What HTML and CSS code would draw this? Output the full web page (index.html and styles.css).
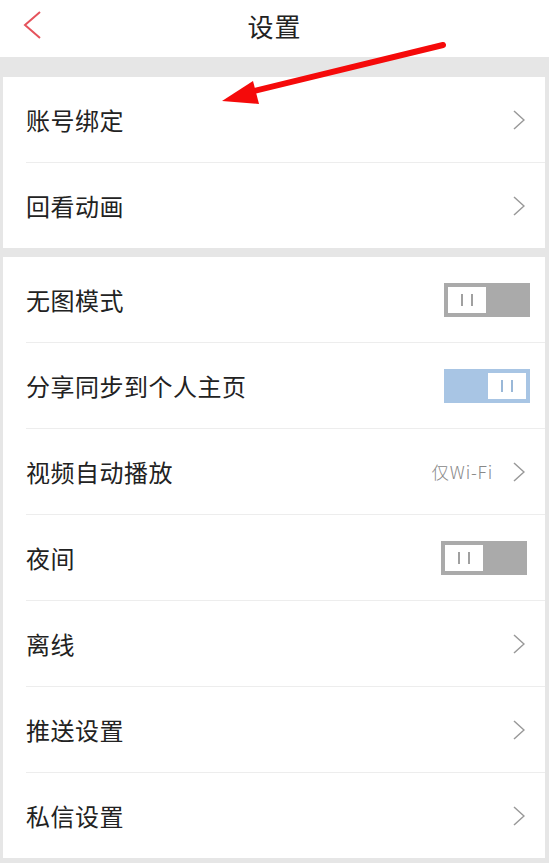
FILE: index.html
```html
<!DOCTYPE html>
<html lang="zh">
<head>
<meta charset="utf-8">
<link rel="stylesheet" href="styles.css">
</head>
<body>
<div class="page">
  <header class="topbar">
    <svg class="back" width="20" height="30" viewBox="0 0 20 30"><polyline points="17,2 2,15 17,28" fill="none" stroke="#e5535c" stroke-width="2"/></svg>
    <h1 class="title">设置</h1>
  </header>
  <div class="gap gap-top"></div>
  <section class="card">
    <div class="row"><span class="label">账号绑定</span><svg class="chev" width="12" height="20" viewBox="0 0 12 20"><polyline points="1,1 11,10 1,19" fill="none" stroke="#999" stroke-width="1.5"/></svg></div>
    <div class="row last"><span class="label">回看动画</span><svg class="chev" width="12" height="20" viewBox="0 0 12 20"><polyline points="1,1 11,10 1,19" fill="none" stroke="#999" stroke-width="1.5"/></svg></div>
  </section>
  <div class="gap gap-mid"></div>
  <section class="card">
    <div class="row"><span class="label">无图模式</span><span class="toggle off"><span class="knob"><i></i><i></i></span></span></div>
    <div class="row"><span class="label">分享同步到个人主页</span><span class="toggle on"><span class="knob"><i></i><i></i></span></span></div>
    <div class="row"><span class="label">视频自动播放</span><span class="value">仅Wi-Fi</span><svg class="chev" width="12" height="20" viewBox="0 0 12 20"><polyline points="1,1 11,10 1,19" fill="none" stroke="#999" stroke-width="1.5"/></svg></div>
    <div class="row"><span class="label">夜间</span><span class="toggle off night"><span class="knob"><i></i><i></i></span></span></div>
    <div class="row"><span class="label">离线</span><svg class="chev" width="12" height="20" viewBox="0 0 12 20"><polyline points="1,1 11,10 1,19" fill="none" stroke="#999" stroke-width="1.5"/></svg></div>
    <div class="row"><span class="label">推送设置</span><svg class="chev" width="12" height="20" viewBox="0 0 12 20"><polyline points="1,1 11,10 1,19" fill="none" stroke="#999" stroke-width="1.5"/></svg></div>
    <div class="row last"><span class="label">私信设置</span><svg class="chev" width="12" height="20" viewBox="0 0 12 20"><polyline points="1,1 11,10 1,19" fill="none" stroke="#999" stroke-width="1.5"/></svg></div>
  </section>
  <svg class="arrow" width="549" height="130" viewBox="0 0 549 130">
    <line x1="443" y1="45" x2="250" y2="92" stroke="#f50a0a" stroke-width="6" stroke-linecap="round"/>
    <polygon points="222,101 253,81 259,104" fill="#f50a0a"/>
  </svg>
</div>
</body>
</html>
```
FILE: styles.css
```css
* { box-sizing: border-box; margin: 0; padding: 0; }
html, body { background: #e6e6e6; }
body {
  font-family: "Noto Sans CJK SC", "Noto Sans", sans-serif;
  color: #222;
  width: 549px;
  height: 863px;
  overflow: hidden;
}
.page { position: relative; }
.topbar {
  height: 57px;
  background: #fff;
  display: flex;
  align-items: center;
  justify-content: center;
  position: relative;
}
.back { position: absolute; left: 23px; top: 10px; }
.title {
  font-size: 26px;
  font-weight: normal;
  color: #222;
  line-height: 1;
  margin-top: -6px;
  letter-spacing: 1px;
}
.gap-top { height: 20px; }
.gap-mid { height: 9px; }
.card {
  background: #fff;
  margin: 0 4px 0 3px;
}
.row {
  height: 86px;
  margin-left: 23px;
  padding-right: 15px;
  border-bottom: 1px solid #ededed;
  display: flex;
  align-items: center;
}
.row.last { height: 85px; border-bottom: none; }
.label {
  flex: 1;
  font-size: 24px;
  color: #222;
  letter-spacing: 0.5px;
}
.chev { margin-right: 5px; }
.value {
  font-size: 17.5px;
  font-weight: 300;
  color: #888;
  letter-spacing: 0.8px;
  margin-right: 20px;
}
.toggle {
  width: 86px;
  height: 34px;
  display: flex;
  align-items: center;
  padding: 0 4px;
}
.toggle.off { background: #aaaaaa; justify-content: flex-start; }
.toggle.on { background: #a8c5e4; justify-content: flex-end; }
.toggle.night { margin-right: 3px; }
.knob {
  width: 38px;
  height: 26px;
  background: #fff;
  display: flex;
  justify-content: center;
  align-items: center;
  gap: 8px;
}
.knob i {
  display: block;
  width: 2px;
  height: 12px;
  background: #a0a0a0;
}
.toggle.on .knob i { background: #9ab8d8; }
.arrow { position: absolute; left: 0; top: 0; pointer-events: none; }
```
